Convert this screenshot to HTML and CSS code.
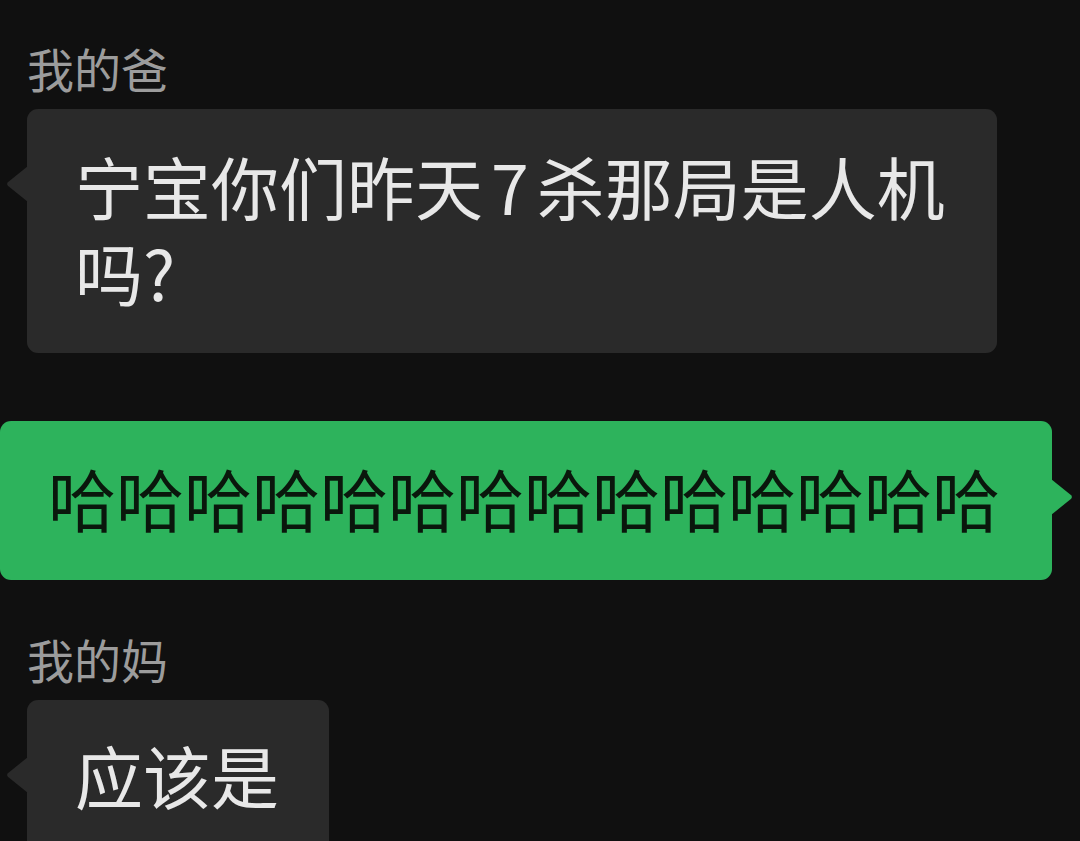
FILE: index.html
```html
<!DOCTYPE html>
<html lang="zh-CN">
<head>
<meta charset="utf-8">
<title>chat</title>
<link rel="stylesheet" href="styles.css">
</head>
<body>
<div class="chat">
  <div class="msg msg-left">
    <div class="name">我的爸</div>
    <div class="bubble bubble-gray">宁宝你们昨天<span class="digit">7</span>杀那局是人机吗?</div>
  </div>
  <div class="msg msg-right">
    <div class="bubble bubble-green">哈哈哈哈哈哈哈哈哈哈哈哈哈哈</div>
  </div>
  <div class="msg msg-left msg-second">
    <div class="name">我的妈</div>
    <div class="bubble bubble-gray bubble-short">应该是</div>
  </div>
</div>
</body>
</html>
```

FILE: styles.css
```css
html, body {
  margin: 0;
  padding: 0;
  background: #101010;
  height: 841px;
  overflow: hidden;
}

.chat {
  display: flex;
  flex-direction: column;
  padding-top: 40px;
  font-family: "Noto Sans CJK SC", "Noto Sans", sans-serif;
}

.msg {
  display: flex;
  flex-direction: column;
}

.msg-left {
  align-items: flex-start;
  padding-left: 27px;
}

.msg-right {
  align-items: flex-end;
  padding-right: 28px;
  margin-top: 68px;
}

.msg-second {
  margin-top: 51px;
}

.name {
  font-size: 47px;
  line-height: 56px;
  color: #9c9c9c;
  margin-bottom: 13px;
}

.bubble {
  position: relative;
  font-size: 68px;
  line-height: 86px;
  border-radius: 11px;
  padding: 34px 40px 38px 48px;
  box-sizing: border-box;
}

.bubble-gray {
  background: #2a2a2a;
  color: #e8e8e8;
  width: 970px;
}

.bubble-short {
  width: auto;
  padding-top: 32px;
  padding-right: 50px;
}

.digit {
  margin: 0 8px 0 8px;
}

.bubble-green {
  background: #2db35c;
  color: #0a170c;
  font-size: 68px;
  white-space: nowrap;
  padding: 34px 52px 39px 48px;
}

.bubble-gray::before {
  content: "";
  position: absolute;
  left: -20px;
  top: 57px;
  width: 21px;
  height: 36px;
  background: #2a2a2a;
  clip-path: polygon(100% 0, 100% 100%, 4% 55%, 0 50%, 4% 45%);
}

.bubble-green::after {
  content: "";
  position: absolute;
  right: -20px;
  top: 58px;
  width: 21px;
  height: 36px;
  background: #2db35c;
  clip-path: polygon(0 0, 0 100%, 96% 55%, 100% 50%, 96% 45%);
}
```
